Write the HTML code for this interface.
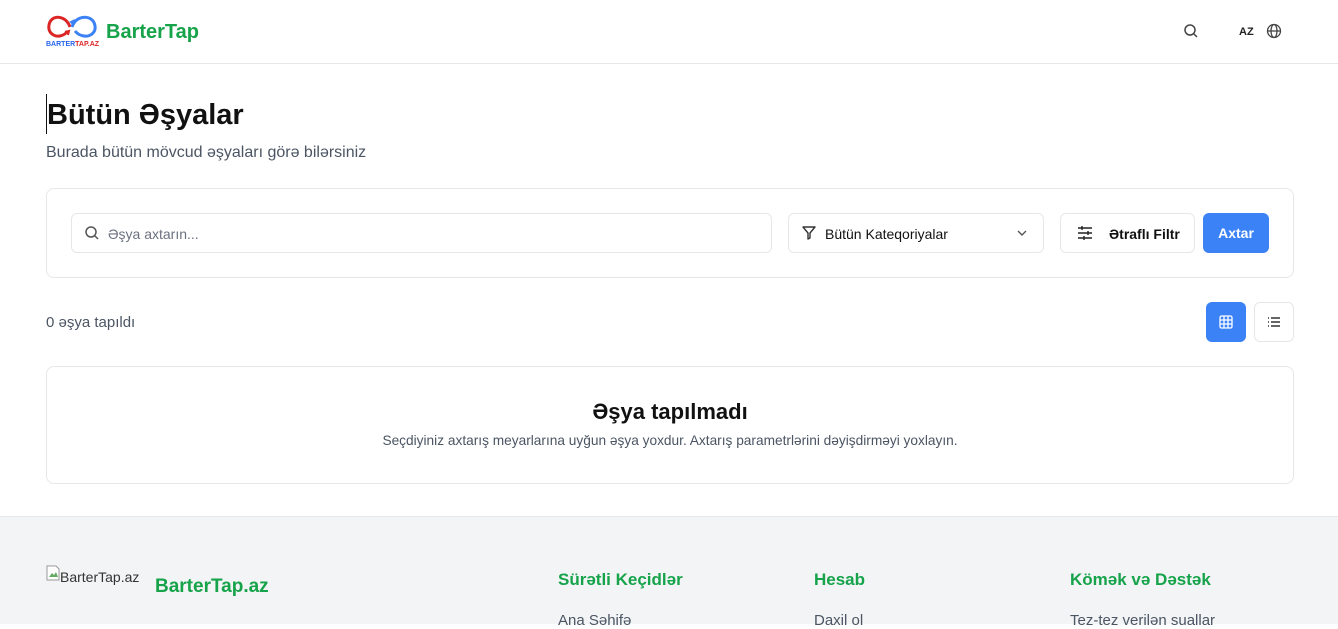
<!DOCTYPE html>
<html><head><meta charset="utf-8"><style>
*{box-sizing:border-box;margin:0;padding:0}
body{width:1338px;height:624px;overflow:hidden;font-family:"Liberation Sans",sans-serif;background:#fff;color:#111;position:relative}
.abs{position:absolute}
.hdr{top:0;left:0;width:1338px;height:64px;border-bottom:1px solid #e5e7eb}
.box{border:1px solid #e5e7eb;border-radius:8px;background:#fff}
.g{color:#16a34a;font-weight:bold}
</style></head><body>
<div class="abs hdr">
 <svg class="abs" style="left:45px;top:12px" width="54" height="36" viewBox="0 0 54 36">
  <path d="M25 15 C22 6 14 4 9 6 C3 9 2 18 7 22 C12 26 19 24 23 19" stroke="#dc2626" stroke-width="3" fill="none"/>
  <path d="M27 15 C30 6 38 4 44 6 C51 9 52 18 47 22 C42 26 34 24 30 19" stroke="#3b82f6" stroke-width="3" fill="none"/>
  <path d="M20 20l4-1-1 4" stroke="#dc2626" stroke-width="2" fill="none"/>
  <path d="M30 8l-4 2 3 3" stroke="#3b82f6" stroke-width="2" fill="none"/>
  <text x="1" y="34" font-size="7" font-weight="bold" fill="#2563eb" font-family="Liberation Sans">BARTER<tspan fill="#dc2626">TAP.AZ</tspan></text>
 </svg>
 <div class="abs g" style="left:106px;top:21px;font-size:20px">BarterTap</div>
 <svg class="abs" style="left:1183px;top:23px" width="16" height="16" viewBox="0 0 16 16"><circle cx="7" cy="7" r="5" stroke="#444" stroke-width="1.5" fill="none"/><path d="M11 11l3 3" stroke="#444" stroke-width="1.5"/></svg>
 <div class="abs" style="left:1239px;top:26px;font-size:11px;font-weight:bold;color:#222">AZ</div>
 <svg class="abs" style="left:1266px;top:23px" width="16" height="16" viewBox="0 0 16 16" fill="none" stroke="#444" stroke-width="1.3"><circle cx="8" cy="8" r="6.5"/><ellipse cx="8" cy="8" rx="3" ry="6.5"/><path d="M1.5 8h13"/></svg>
</div>
<div class="abs" style="left:46px;top:94px;width:1px;height:40px;background:#111"></div>
<div class="abs" style="left:47px;top:99px;font-size:29px;font-weight:bold">Bütün Əşyalar</div>
<div class="abs" style="left:46px;top:144px;font-size:16px;color:#4b5563">Burada bütün mövcud əşyaları görə bilərsiniz</div>
<div class="abs box" style="left:46px;top:188px;width:1248px;height:90px"></div>
<div class="abs box" style="left:71px;top:213px;width:701px;height:40px;border-radius:6px"></div>
<svg class="abs" style="left:84px;top:225px" width="16" height="16" viewBox="0 0 16 16"><circle cx="7" cy="7" r="5" stroke="#555" stroke-width="1.5" fill="none"/><path d="M11 11l3 3" stroke="#555" stroke-width="1.5"/></svg>
<div class="abs" style="left:108px;top:226px;font-size:14px;color:#6b7280">Əşya axtarın...</div>
<div class="abs box" style="left:788px;top:213px;width:256px;height:40px;border-radius:6px"></div>
<svg class="abs" style="left:801px;top:225px" width="16" height="16" viewBox="0 0 16 16"><path d="M2 2h12l-5 6v5l-2 1V8z" stroke="#333" stroke-width="1.4" fill="none" stroke-linejoin="round"/></svg>
<div class="abs" style="left:825px;top:226px;font-size:14px;color:#111">Bütün Kateqoriyalar</div>
<svg class="abs" style="left:1016px;top:227px" width="12" height="12" viewBox="0 0 12 12"><path d="M2 4l4 4 4-4" stroke="#555" stroke-width="1.4" fill="none"/></svg>
<div class="abs box" style="left:1060px;top:213px;width:135px;height:40px;border-radius:6px"></div>
<svg class="abs" style="left:1077px;top:225px" width="16" height="16" viewBox="0 0 16 16" stroke="#222" stroke-width="1.4"><path d="M1 3h14M1 8h14M1 13h14"/><path d="M5 1v4M11 6v4M7 11v4"/></svg>
<div class="abs" style="left:1109px;top:226px;font-size:14px;font-weight:bold">Ətraflı Filtr</div>
<div class="abs" style="left:1203px;top:213px;width:66px;height:40px;border-radius:6px;background:#3b82f6;color:#fff;font-size:14px;font-weight:bold;text-align:center;line-height:40px">Axtar</div>
<div class="abs" style="left:46px;top:314px;font-size:15px;color:#4b5563">0 əşya tapıldı</div>
<div class="abs" style="left:1206px;top:302px;width:40px;height:40px;border-radius:6px;background:#3b82f6"></div>
<svg class="abs" style="left:1219px;top:315px" width="14" height="14" viewBox="0 0 14 14" fill="none" stroke="#fff" stroke-width="1.3"><rect x="1" y="1" width="12" height="12" rx="1.5"/><path d="M5 1v12M9 1v12M1 5h12M1 9h12"/></svg>
<div class="abs box" style="left:1254px;top:302px;width:40px;height:40px;border-radius:6px"></div>
<svg class="abs" style="left:1267px;top:315px" width="14" height="14" viewBox="0 0 14 14" stroke="#333" stroke-width="1.5"><path d="M1 3h1M1 7h1M1 11h1M4 3h9M4 7h9M4 11h9"/></svg>
<div class="abs box" style="left:46px;top:366px;width:1248px;height:118px"></div>
<div class="abs" style="left:46px;top:399px;width:1248px;text-align:center;font-size:22px;font-weight:bold">Əşya tapılmadı</div>
<div class="abs" style="left:46px;top:433px;width:1248px;text-align:center;font-size:13.7px;color:#4b5563">Seçdiyiniz axtarış meyarlarına uyğun əşya yoxdur. Axtarış parametrlərini dəyişdirməyi yoxlayın.</div>
<div class="abs" style="left:0;top:516px;width:1338px;height:108px;background:#f3f4f6;border-top:1px solid #e5e7eb"></div>
<svg class="abs" style="left:46px;top:565px" width="14" height="16" viewBox="0 0 14 16"><path d="M1 1h9l3 3v11H1z" fill="#fff" stroke="#999"/><path d="M3 12l3-4 2 2 2-3 2 5z" fill="#6a6"/></svg>
<div class="abs" style="left:60px;top:569px;font-size:14px;color:#333">BarterTap.az</div>
<div class="abs g" style="left:155px;top:576px;font-size:19px">BarterTap.az</div>
<div class="abs g" style="left:558px;top:570px;font-size:17px">Sürətli Keçidlər</div>
<div class="abs g" style="left:814px;top:570px;font-size:17px">Hesab</div>
<div class="abs g" style="left:1070px;top:570px;font-size:17px">Kömək və Dəstək</div>
<div class="abs" style="left:558px;top:612px;font-size:15px;color:#4b5563">Ana Səhifə</div>
<div class="abs" style="left:814px;top:612px;font-size:15px;color:#4b5563">Daxil ol</div>
<div class="abs" style="left:1070px;top:612px;font-size:15px;color:#4b5563">Tez-tez verilən suallar</div>
</body></html>
